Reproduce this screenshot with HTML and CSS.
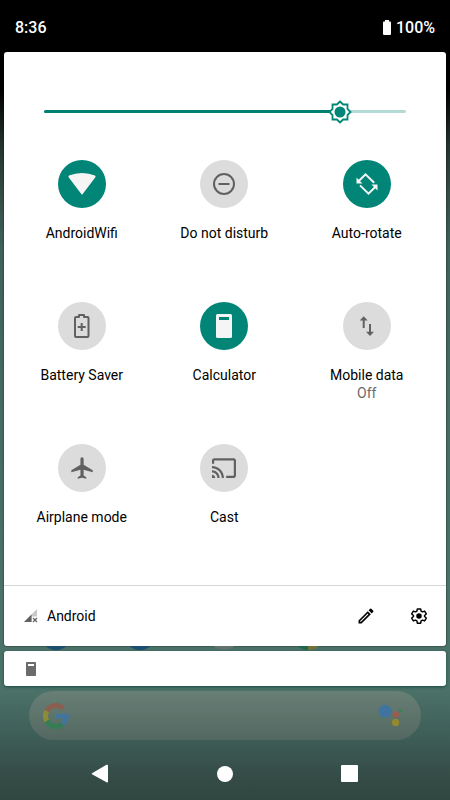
FILE: index.html
```html
<!DOCTYPE html>
<html lang="en">
<head>
<meta charset="utf-8">
<title>Quick settings</title>
<link rel="stylesheet" href="styles.css">
</head>
<body>
<div class="screen">
  <header class="status">
    <span>8:36</span>
    <span class="battery"><svg width="10" height="15" viewBox="0 0 10 15"><path fill="#fff" d="M3 0h4v1.5h1.2Q9 1.500 9 2.500V14q0 1-1 1H2q-1 0-1-1V2.500Q1 1.500 1.800 1.500H3z"/></svg>100%</span>
  </header>

  <main class="panel">
    <div class="slider">
      <div class="track"><div class="fill"></div></div>
      <svg class="thumb" width="24" height="24" viewBox="0 0 24 24"><path fill="#fff" stroke="#008577" stroke-width="1.800" d="M12 1.500L15.100 4.500H19.500V8.900L22.500 12L19.500 15.100V19.500H15.100L12 22.500L8.900 19.500H4.500V15.100L1.500 12L4.500 8.900V4.500H8.900z"/><circle cx="12" cy="12" r="5.500" fill="#008577"/></svg>
    </div>
    <div class="tiles">
      <div class="tile"><div class="disc on"><svg viewBox="0 0 48 48"><path fill="#f5f5f5" d="M10.800 17.500Q9.800 16.500 11 15.600Q17 13 24 13T37 15.600Q38.200 16.500 37.200 17.500L24.700 34Q24 35 23.300 34z"/></svg></div><span>AndroidWifi</span></div>
      <div class="tile"><div class="disc"><svg viewBox="0 0 48 48" fill="none" stroke="#616161" stroke-width="2"><circle cx="24" cy="24" r="10"/><path d="M18.500 24h11"/></svg></div><span>Do not disturb</span></div>
      <div class="tile"><div class="disc on"><svg viewBox="0 0 48 48" fill="none" stroke="#f5f5f5" stroke-width="2"><path d="M31.200 22.800L22.500 14.300L15.500 21.300M17 25.400L25.500 33.700L32.500 26.700"/><path fill="#f5f5f5" stroke="none" d="M13.500 17.500V23.500H19.500zM34.500 30.500V24.500H28.500z"/></svg></div><span>Auto-rotate</span></div>
      <div class="tile"><div class="disc"><svg viewBox="0 0 48 48" fill="none" stroke="#616161" stroke-width="2"><path stroke-linejoin="round" d="M21 15V13H26V15H29.500Q30.500 15 30.500 16V34Q30.500 35 29.500 35H18Q17 35 17 34V16Q17 15 18 15z"/><path d="M23.700 21v8M19.700 25h8"/></svg></div><span>Battery Saver</span></div>
      <div class="tile"><div class="disc on"><svg viewBox="0 0 48 48"><rect x="16" y="12" width="16" height="24" rx="1.500" fill="#f5f5f5"/><path fill="#008577" d="M19 15h10v3H19z"/></svg></div><span>Calculator</span></div>
      <div class="tile"><div class="disc"><svg viewBox="0 0 48 48" fill="#616161"><path d="M20.700 14.200L24.700 18.500H21.700V26H19.700V18.500H16.700zM27 34L31 29.700H28V22H26V29.700H23z"/></svg></div><span>Mobile data</span><small>Off</small></div>
      <div class="tile"><div class="disc"><svg viewBox="0 0 48 48"><path fill="#616161" transform="translate(11.200 11.200) scale(1.070)" d="M22 16v-2l-8.500-5V3.500C13.500 2.670 12.830 2 12 2s-1.500.670-1.500 1.500V9L2 14v2l8.500-2.500V19L8 20.500V22l4-1 4 1v-1.500L13.500 19v-5.500L22 16z"/></svg></div><span>Airplane mode</span></div>
      <div class="tile"><div class="disc"><svg viewBox="0 0 48 48"><path fill="#616161" transform="translate(10.900 11.100) scale(1.090)" d="M21 3H3c-1.100 0-2 .900-2 2v3h2V5h18v14h-7v2h7c1.100 0 2-.900 2-2V5c0-1.100-.900-2-2-2zM1 18v3h3c0-1.660-1.340-3-3-3zm0-4v2c2.760 0 5 2.240 5 5h2c0-3.870-3.130-7-7-7zm0-4v2c4.970 0 9 4.030 9 9h2c0-6.080-4.930-11-11-11z"/></svg></div><span>Cast</span></div>
    </div>
    <footer class="footer">
      <svg class="signal" width="14" height="14" viewBox="0 0 14 14"><path fill="#c8c8c8" d="M13 0V7.500H7.500V13H0z"/><path fill="#616161" d="M7.500 5.500V13H0z"/><path stroke="#616161" stroke-width="1.200" d="M9 9l4 4M13 9l-4 4"/></svg>
      <span class="carrier">Android</span>
      <svg class="pencil" width="20" height="20" viewBox="0 0 24 24"><path d="M3 17.250V21h3.750L17.810 9.940l-3.750-3.750L3 17.250zM5.920 19H5v-.920l9.060-9.060.920.920L5.920 19zM20.710 5.630l-2.340-2.340a1 1 0 0 0-1.410 0l-1.830 1.830 3.750 3.750 1.830-1.830a1 1 0 0 0 0-1.410z"/></svg>
      <svg class="gear" width="18" height="18" viewBox="0 0 24 24"><path fill="none" stroke="#000" stroke-width="2" stroke-linejoin="round" d="M9.800 2.500h4.400l.6 3 1.800 1 2.900-1 2.200 3.800-2.300 2v1.400l2.300 2-2.200 3.800-2.900-1-1.800 1-.6 3H9.800l-.6-3-1.800-1-2.900 1-2.200-3.800 2.300-2v-1.400l-2.300-2 2.200-3.800 2.900 1 1.800-1z"/><circle cx="12" cy="12" r="3.700"/></svg>
    </footer>
  </main>

  <div class="dock"><i class="blue"></i><i class="blue"></i><i class="gray"></i><i class="chrome"></i></div>

  <section class="shelf"><svg width="10" height="14" viewBox="0 0 10 14"><rect width="10" height="14" rx=".8" fill="#6b6b6b"/><path fill="#fff" d="M2 2h6v2H2z"/></svg></section>

  <div class="search">
    <svg width="26" height="26" viewBox="0 0 26 26" fill="none" stroke-width="5"><path stroke="#8b5f50" d="M3.800 8A10.500 10.500 0 0 1 20.300 5.600"/><path stroke="#8d8b38" d="M3.800 18A10.500 10.500 0 0 1 3.800 8"/><path stroke="#367c55" d="M19.500 21.300A10.500 10.500 0 0 1 3.800 18"/><path stroke="#43749c" d="M13 13.300H23.300A10.500 10.500 0 0 1 19.500 21.300"/></svg>
    <svg width="26" height="24" viewBox="0 0 26 24"><circle cx="7" cy="7.300" r="6.500" fill="#40749e"/><circle cx="17.800" cy="10.500" r="3.300" fill="#985d51"/><circle cx="22.500" cy="6.700" r="1.700" fill="#398455"/><circle cx="17.600" cy="18.500" r="3.700" fill="#94892f"/></svg>
  </div>

  <nav class="nav">
    <svg width="18" height="20" viewBox="0 0 18 20"><path fill="#fff" d="M1 9.200L15.500.8Q17 .2 17 1.700V17.500Q17 19 15.500 18.300L1 10.200Q.3 9.700 1 9.200z"/></svg>
    <i class="home"></i><i class="recent"></i>
  </nav>
</div>
</body>
</html>
```
FILE: styles.css
```css
* { box-sizing: border-box; }
body { margin: 0; font-family: Roboto, sans-serif; color: #000; }
svg { display: block; flex: none; }
.screen {
  width: 450px; height: 800px; overflow: hidden;
  display: flex; flex-direction: column;
  background: linear-gradient(#000 0, #000 90px, #23332f 145px, #344b45 190px, #3f625b 250px, #456b62 400px, #4a7268 600px, #4b7268 690px, #40605a 730px, #354c47 775px, #304640 800px);
}
.status {
  height: 52px; padding: 2px 15px 0 15px; background: #000; color: #fff;
  display: flex; align-items: center; justify-content: space-between;
  font-size: 16px; font-weight: 500;
}
.battery { display: flex; align-items: center; gap: 4px; }
.panel {
  height: 594px; margin: 0 4px; background: #fff; border-radius: 3px;
  display: flex; flex-direction: column;
  box-shadow: 0 0 2px rgba(0,0,0,.7);
}
.slider { position: relative; height: 107px; padding: 58px 40px 0; }
.track { height: 3px; border-radius: 2px; background: #b4dcd7; }
.fill { width: 296px; height: 3px; border-radius: 2px; background: #008070; }
.thumb { position: absolute; left: 324px; top: 47.500px; }
.tiles {
  height: 426px; padding: 0 6.500px; display: grid;
  grid-template-columns: repeat(3, 142.500px); grid-auto-rows: 142px;
}
.tile { display: flex; flex-direction: column; align-items: center; font-size: 14px; line-height: 18px; }
.disc { width: 48px; height: 48px; margin: .5px 0 16px; border-radius: 50%; background: #dcdcdc; }
.disc.on { background: #008577; }
.disc svg { width: 48px; height: 48px; }
.tile small { font-size: 14px; color: #6b6b6b; }
.footer {
  height: 61px; border-top: 1px solid #d4d8d7; padding: 0 18px 0 20px;
  display: flex; align-items: center; font-size: 14px;
}
.carrier { margin: 0 auto 0 9px; }
.gear { margin-left: 34px; }
.dock { height: 5px; overflow: hidden; display: flex; gap: 52px; padding-left: 40px; align-items: flex-end; }
.dock i { width: 32px; height: 32px; flex: none; margin-bottom: 1px; border-radius: 50%; }
.dock .blue { background: #1b4e70; }
.dock .gray { background: #60746c; }
.dock .chrome { background: linear-gradient(90deg, #1c6849 50%, #747337 50%); }
.shelf {
  height: 35px; margin: 0 4px; padding: 0 22px; background: #fff; border-radius: 3px;
  display: flex; align-items: center; box-shadow: 0 1px 3px #164b43;
}
.search {
  height: 49px; margin: 5px 29px 0; padding: 0 17px 0 14px; border-radius: 25px;
  background: linear-gradient(#687f76, #526860);
  display: flex; align-items: center; justify-content: space-between;
}
.nav { height: 60px; margin-top: auto; padding: 7px 92px 0 91px; display: flex; align-items: center; justify-content: space-between; }
.nav i { background: #fff; }
.home { width: 16px; height: 16px; border-radius: 50%; }
.recent { width: 17px; height: 17px; border-radius: 1px; }
```
